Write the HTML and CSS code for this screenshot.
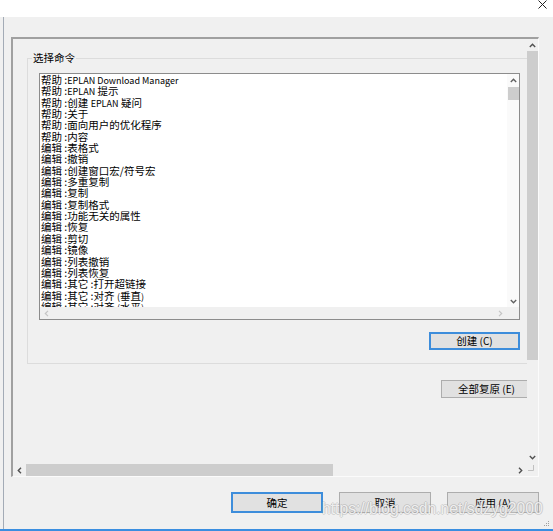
FILE: index.html
```html
<!DOCTYPE html>
<html lang="zh-CN">
<head>
<meta charset="utf-8">
<title>选择命令</title>
<link rel="stylesheet" href="styles.css">
</head>
<body>
<div class="titlebar">
  <svg class="close" width="9" height="9" viewBox="0 0 9 9"><path d="M0.5 0.5L8.5 8.5M8.5 0.5L0.5 8.5" stroke="#222" stroke-width="1" fill="none"/></svg>
</div>
<div class="frame">
  <div class="panel">
    <div class="viewport">
      <div class="content">
        <div class="group">
          <div class="group-head"><span class="legend">选择命令</span></div>
          <div class="group-body">
            <div class="listbox">
              <ul class="list">
                <li>帮助 :<span class="lat">EPLAN Download Manager</span></li>
                <li>帮助 :<span class="lat">EPLAN</span> 提示</li>
                <li>帮助 :创建 <span class="lat">EPLAN</span> 疑问</li>
                <li>帮助 :关于</li>
                <li>帮助 :面向用户的优化程序</li>
                <li>帮助 :内容</li>
                <li>编辑 :表格式</li>
                <li>编辑 :撤销</li>
                <li>编辑 :创建窗口宏/符号宏</li>
                <li>编辑 :多重复制</li>
                <li>编辑 :复制</li>
                <li>编辑 :复制格式</li>
                <li>编辑 :功能无关的属性</li>
                <li>编辑 :恢复</li>
                <li>编辑 :剪切</li>
                <li>编辑 :镜像</li>
                <li>编辑 :列表撤销</li>
                <li>编辑 :列表恢复</li>
                <li>编辑 :其它 :打开超链接</li>
                <li>编辑 :其它 :对齐 <span class="lat">(</span>垂直<span class="lat">)</span></li>
                <li>编辑 :其它 :对齐 <span class="lat">(</span>水平<span class="lat">)</span></li>
              </ul>
              <div class="vbar lb-vbar">
                <span class="arrow up"><svg width="7" height="5" viewBox="0 0 7 5"><path d="M0.8 4L3.5 1.3L6.2 4" stroke="#606060" stroke-width="1.4" fill="none"/></svg></span>
                <span class="thumb lb-vthumb"></span>
                <span class="track"></span>
                <span class="arrow down"><svg width="7" height="5" viewBox="0 0 7 5"><path d="M0.8 1L3.5 3.7L6.2 1" stroke="#606060" stroke-width="1.4" fill="none"/></svg></span>
              </div>
              <div class="hbar lb-hbar">
                <span class="arrow left"><svg width="5" height="7" viewBox="0 0 5 7"><path d="M4 0.8L1.3 3.5L4 6.2" stroke="#c4c4c4" stroke-width="1.2" fill="none"/></svg></span>
                <span class="track"></span>
                <span class="arrow right"><svg width="5" height="7" viewBox="0 0 5 7"><path d="M1 0.8L3.7 3.5L1 6.2" stroke="#c4c4c4" stroke-width="1.2" fill="none"/></svg></span>
              </div>
              <div class="corner lb-corner"></div>
            </div>
            <div class="btn-row create-row"><button class="btn default">创建 <span class="lat">(C)</span></button></div>
          </div>
        </div>
        <div class="btn-row reset-row"><button class="btn">全部复原 <span class="lat">(E)</span></button></div>
      </div>
    </div>
    <div class="vbar panel-vbar">
      <span class="arrow up"><svg width="7" height="5" viewBox="0 0 7 5"><path d="M0.8 4L3.5 1.3L6.2 4" stroke="#505050" stroke-width="1.4" fill="none"/></svg></span>
      <span class="thumb panel-vthumb"></span>
      <span class="track"></span>
      <span class="arrow down"><svg width="7" height="5" viewBox="0 0 7 5"><path d="M0.8 1L3.5 3.7L6.2 1" stroke="#505050" stroke-width="1.4" fill="none"/></svg></span>
    </div>
    <div class="hbar panel-hbar">
      <span class="arrow left"><svg width="5" height="7" viewBox="0 0 5 7"><path d="M4 0.8L1.3 3.5L4 6.2" stroke="#505050" stroke-width="1.4" fill="none"/></svg></span>
      <span class="thumb panel-hthumb"></span>
      <span class="track"></span>
      <span class="arrow right"><svg width="5" height="7" viewBox="0 0 5 7"><path d="M1 0.8L3.7 3.5L1 6.2" stroke="#505050" stroke-width="1.4" fill="none"/></svg></span>
    </div>
    <div class="corner panel-corner"><svg width="6" height="6" viewBox="0 0 6 6"><path d="M5.5 0V5.5H0" stroke="#c0c0c0" stroke-width="1" fill="none"/></svg></div>
  </div>
  <div class="actions">
    <button class="btn wide default">确定</button>
    <button class="btn wide">取消</button>
    <button class="btn wide">应用 <span class="lat">(A)</span></button>
  </div>
</div>
<div class="bottom-edge"></div>
<div class="watermark">https://blog.csdn.net/sdzyg2000</div>
<svg class="size-grip" width="6" height="6" viewBox="0 0 6 6"><rect x="4" y="0" width="1" height="1" fill="#a0a0a0"/><rect x="2" y="2" width="1" height="1" fill="#a0a0a0"/><rect x="4" y="2" width="1" height="1" fill="#a0a0a0"/><rect x="0" y="4" width="1" height="1" fill="#a0a0a0"/><rect x="2" y="4" width="1" height="1" fill="#a0a0a0"/><rect x="4" y="4" width="1" height="1" fill="#a0a0a0"/></svg>
</body>
</html>
```

FILE: styles.css
```css
* { box-sizing: border-box; }

html, body {
  margin: 0;
  padding: 0;
}

body {
  width: 553px;
  height: 531px;
  overflow: hidden;
  position: relative;
  background: #f0f0f0;
  font-family: "Noto Sans CJK SC", "Noto Sans", sans-serif;
  font-size: 10.5px;
  color: #000;
}

.lat {
  font-size: 9px;
}

.titlebar {
  height: 17px;
  background: #fff;
  display: flex;
  justify-content: flex-end;
  align-items: flex-start;
  padding: 0 6px 0 0;
}

.close {
  display: block;
}

.frame {
  height: 512px;
  margin-left: 3px;
  border-left: 1px solid #a3abb6;
  display: flex;
  flex-direction: column;
}

.panel {
  margin: 20px 0 0 7px;
  width: 528px;
  height: 440px;
  border-top: 2px solid #a0a0a0;
  border-left: 2px solid #a0a0a0;
  border-right: 1px solid #fbfbfb;
  border-bottom: 1px solid #fbfbfb;
  display: grid;
  grid-template-columns: 1fr 11px;
  grid-template-rows: 1fr 12px;
}

.viewport {
  min-width: 0;
  min-height: 0;
  overflow: hidden;
}

.content {
  width: 521px;
  padding: 19px 0 0 14px;
}

.group {
  width: 507px;
  border: 1px solid #dcdcdc;
}

.group-head {
  display: flex;
  height: 12px;
  margin-top: -7px;
  padding-left: 4px;
  line-height: 12px;
}

.legend {
  padding: 0 1px;
  background: #f0f0f0;
  font-size: 10.5px;
}

.group-body {
  padding: 9px 13px 13px 11px;
}

.listbox {
  width: 481px;
  height: 247px;
  border: 1px solid #8c8c8c;
  background: #fff;
  display: grid;
  grid-template-columns: 1fr 12px;
  grid-template-rows: 1fr 12px;
}

.list {
  margin: 0;
  padding: 0 0 0 1px;
  list-style: none;
  overflow: hidden;
  min-height: 0;
  line-height: 11.35px;
}

.list li {
  white-space: nowrap;
  height: 11.35px;
}

.vbar {
  display: flex;
  flex-direction: column;
  min-height: 0;
}

.hbar {
  display: flex;
  flex-direction: row;
  min-width: 0;
}

.arrow {
  display: flex;
  align-items: center;
  justify-content: center;
  flex: none;
}

.arrow svg { display: block; }

.track { flex: 1; }

.thumb {
  flex: none;
  background: #cdcdcd;
}

.lb-vbar { background: #fafafa; }
.lb-vbar .arrow { height: 12px; }
.lb-vthumb { height: 13px; margin: 1px 0 0 1px; }

.lb-hbar { background: #f0f0f0; }
.lb-hbar .arrow { width: 13px; }

.lb-corner { background: #f0f0f0; }

.panel-vbar { background: #f0f0f0; }
.panel-vbar .arrow.up { height: 12px; }
.panel-vbar .arrow.down { height: 13px; }
.panel-vthumb { height: 309px; }

.panel-hbar { background: #f0f0f0; }
.panel-hbar .arrow.left { width: 13px; }
.panel-hbar .arrow.right { width: 14px; }
.panel-hthumb { width: 307px; }

.panel-corner {
  background: #f0f0f0;
  display: flex;
  align-items: flex-start;
  justify-content: flex-start;
  padding: 1px 0 0 1px;
}

.panel-corner svg { display: block; }

.btn-row {
  display: flex;
  justify-content: flex-end;
}

.create-row { margin-top: 12px; }

.reset-row {
  margin-top: 16px;
  padding-right: 2px;
}

.btn {
  width: 91px;
  height: 18px;
  margin: 0;
  padding: 0;
  background: #e1e1e1;
  border: 1px solid #adadad;
  font-family: "Noto Sans CJK SC", "Noto Sans", sans-serif;
  font-size: 10.5px;
  line-height: 14px;
  color: #000;
}

.btn .lat { font-size: 10px; }

.btn.default {
  border: 2px solid #3d8ddb;
}

.actions {
  margin-top: 15px;
  display: flex;
  justify-content: flex-end;
  gap: 16px;
  padding-right: 14px;
}

.btn.wide {
  width: 92px;
  height: 21px;
}

.bottom-edge {
  height: 2px;
  background: #3a8ee0;
}

.watermark {
  position: absolute;
  left: 322px;
  top: 500px;
  font-family: "Liberation Sans", Arial, sans-serif;
  font-size: 15.7px;
  line-height: 18px;
  color: rgba(255, 255, 255, 0.8);
  text-shadow: 1px 0 0 rgba(140,140,140,0.3), -1px 0 0 rgba(140,140,140,0.3), 0 1px 0 rgba(140,140,140,0.3), 0 -1px 0 rgba(140,140,140,0.3);
  white-space: nowrap;
}

.size-grip {
  position: absolute;
  right: 3px;
  bottom: 4px;
  display: block;
}
```
